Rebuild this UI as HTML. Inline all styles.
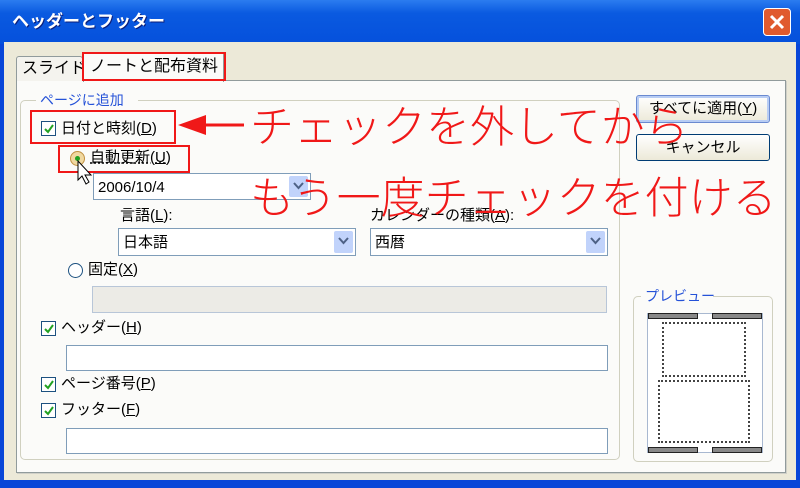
<!DOCTYPE html>
<html><head><meta charset="utf-8"><style>
*{margin:0;padding:0;box-sizing:border-box}
body{width:800px;height:488px;overflow:hidden;background:#0846d8;font-family:"Liberation Sans","Noto Sans CJK JP",sans-serif;font-size:15px;color:#000;position:relative}
.a{position:absolute}
.t{position:absolute;white-space:nowrap;line-height:1}
.win{left:4px;top:42px;width:792px;height:438px;background:#ece9d8}
.panel{left:16px;top:80px;width:770px;height:393px;background:#fbfbf9;border:1px solid #919b9c;box-shadow:1px 1px 0 #d0d0c8}
.grp{border:1px solid #d0d0bf;border-radius:5px}
.cb{position:absolute;width:15px;height:15px;border:1px solid #1c5180;background:#fff}
.cb svg{position:absolute;left:1px;top:1px}
.field{position:absolute;border:1px solid #7f9db9;background:#fff}
.dd{position:absolute;right:2px;top:2px;bottom:2px;width:19px;background:#c1d3fb;border-radius:2px}
.dd svg{position:absolute;left:4px;top:6px}
.btn{position:absolute;border:1px solid #003c74;border-radius:3px;background:linear-gradient(#fff,#ece9d8);text-align:center;font-size:15px;line-height:25px}
.red{position:absolute;border:2px solid #f01818}
.big{color:#f01818;font-size:44px;font-family:"Noto Sans CJK JP",sans-serif;font-weight:300;z-index:5}
.rad{position:absolute;width:15px;height:15px;border-radius:50%;border:1px solid #1c5180;background:#fff}
</style></head><body>
<div class="a" style="left:0;top:0;width:800px;height:44px;background:linear-gradient(#2b7cf0,#0a5ae0 30%,#0550dc)"></div>
<div class="t" style="left:12px;top:13px;color:#fff;font-weight:bold;font-size:17px;text-shadow:1px 1px #0a1e7a">ヘッダーとフッター</div>
<div class="a" style="left:763px;top:8px;width:28px;height:28px;background:#e05a2e;border:1px solid #fff;border-radius:4px"></div>
<svg class="a" style="left:769px;top:14px" width="16" height="16"><path d="M2 2L14 14M14 2L2 14" stroke="#fff" stroke-width="3"/></svg>
<div class="a win"></div>
<div class="a panel"></div>
<div class="a" style="left:16px;top:56px;width:67px;height:25px;background:#f4f3ee;border:1px solid #919b9c;border-bottom:none;border-radius:3px 3px 0 0"></div>
<div class="t" style="left:22px;top:61px;font-size:16px">スライド</div>
<div class="a" style="left:83px;top:52px;width:141px;height:30px;background:#fbfbf9;border:1px solid #919b9c;border-bottom:none;border-top:2px solid #f0a030"></div>
<div class="t" style="left:90px;top:59px;font-size:16px">ノートと配布資料</div>
<div class="red" style="left:82px;top:52px;width:144px;height:29px"></div>

<div class="a grp" style="left:20px;top:100px;width:600px;height:360px"></div>
<div class="a" style="left:36px;top:92px;width:102px;height:16px;background:#fbfbf9"></div>
<div class="t" style="left:40px;top:93px;color:#2552d8;font-size:14px">ページに追加</div>

<div class="cb" style="left:41px;top:121px"><svg width="12" height="12"><path d="M2 6L5 9L10 2" stroke="#21a121" stroke-width="2" fill="none"/></svg></div>
<div class="t" style="left:61px;top:121px">日付と時刻(<u>D</u>)</div>
<div class="red" style="left:30px;top:110px;width:146px;height:34px"></div>
<svg class="a" style="left:176px;top:112px" width="70" height="26"><path d="M2 13L30 3L30 23Z" fill="#f01818"/><path d="M28 13H68" stroke="#f01818" stroke-width="3"/></svg>

<div class="rad" style="left:70px;top:151px;background:#f0d8a0;border-color:#c09040"><div class="a" style="left:4px;top:4px;width:5px;height:5px;border-radius:50%;background:#21a121"></div></div>
<div class="t" style="left:90px;top:150px;text-decoration:underline dotted">自動更新(<u>U</u>)</div>
<div class="red" style="left:58px;top:145px;width:132px;height:28px"></div>
<div class="field" style="left:93px;top:173px;width:218px;height:27px"><div class="t" style="left:4px;top:6px">2006/10/4</div><div class="dd"><svg width="11" height="8"><path d="M1 1L5.5 6L10 1" stroke="#4d6185" stroke-width="2" fill="none"/></svg></div></div>
<svg class="a" style="left:76px;top:160px" width="20" height="26"><path d="M2 1L2 20L6 16L10 24L13 22L9 15L15 15Z" fill="#fff" stroke="#000" stroke-width="1"/></svg>
<div class="t" style="left:120px;top:208px">言語(<u>L</u>):</div>
<div class="field" style="left:118px;top:228px;width:238px;height:28px"><div class="t" style="left:4px;top:6px">日本語</div><div class="dd"><svg width="11" height="8"><path d="M1 1L5.5 6L10 1" stroke="#4d6185" stroke-width="2" fill="none"/></svg></div></div>
<div class="t" style="left:370px;top:208px">カレンダーの種類(<u>A</u>):</div>
<div class="field" style="left:370px;top:228px;width:238px;height:28px"><div class="t" style="left:4px;top:6px">西暦</div><div class="dd"><svg width="11" height="8"><path d="M1 1L5.5 6L10 1" stroke="#4d6185" stroke-width="2" fill="none"/></svg></div></div>

<div class="rad" style="left:68px;top:263px"></div>
<div class="t" style="left:88px;top:262px">固定(<u>X</u>)</div>
<div class="field" style="left:92px;top:286px;width:515px;height:27px;background:#ecebe6;border-color:#b8c6d8"></div>

<div class="cb" style="left:41px;top:321px"><svg width="12" height="12"><path d="M2 6L5 9L10 2" stroke="#21a121" stroke-width="2" fill="none"/></svg></div>
<div class="t" style="left:61px;top:320px">ヘッダー(<u>H</u>)</div>
<div class="field" style="left:66px;top:345px;width:542px;height:26px"></div>
<div class="cb" style="left:41px;top:377px"><svg width="12" height="12"><path d="M2 6L5 9L10 2" stroke="#21a121" stroke-width="2" fill="none"/></svg></div>
<div class="t" style="left:61px;top:376px">ページ番号(<u>P</u>)</div>
<div class="cb" style="left:41px;top:403px"><svg width="12" height="12"><path d="M2 6L5 9L10 2" stroke="#21a121" stroke-width="2" fill="none"/></svg></div>
<div class="t" style="left:61px;top:402px">フッター(<u>F</u>)</div>
<div class="field" style="left:66px;top:428px;width:542px;height:26px"></div>

<div class="btn" style="left:636px;top:95px;width:134px;height:28px;border-color:#6a8ad0;box-shadow:inset 0 0 0 2px #b8cdf4">すべてに適用(<u>Y</u>)</div>
<div class="btn" style="left:636px;top:134px;width:134px;height:27px">キャンセル</div>

<div class="a grp" style="left:633px;top:296px;width:140px;height:166px"></div>
<div class="a" style="left:641px;top:288px;width:72px;height:16px;background:#fbfbf9"></div>
<div class="t" style="left:645px;top:289px;color:#2552d8;font-size:14px">プレビュー</div>
<div class="a" style="left:647px;top:313px;width:116px;height:140px;background:#fff;border:1px solid #a8b8d0"></div>
<div class="a" style="left:648px;top:313px;width:50px;height:6px;background:#888;border:1px solid #222"></div>
<div class="a" style="left:712px;top:313px;width:50px;height:6px;background:#888;border:1px solid #222"></div>
<div class="a" style="left:648px;top:447px;width:50px;height:6px;background:#888;border:1px solid #222"></div>
<div class="a" style="left:712px;top:447px;width:50px;height:6px;background:#888;border:1px solid #222"></div>
<div class="a" style="left:662px;top:322px;width:84px;height:55px;border:2px dotted #444"></div>
<div class="a" style="left:658px;top:380px;width:92px;height:63px;border:2px dotted #444"></div>

<div class="t big" style="left:250px;top:101px">チェックを外してから</div>
<div class="t big" style="left:250px;top:172px">もう一度チェックを付ける</div>
</body></html>
